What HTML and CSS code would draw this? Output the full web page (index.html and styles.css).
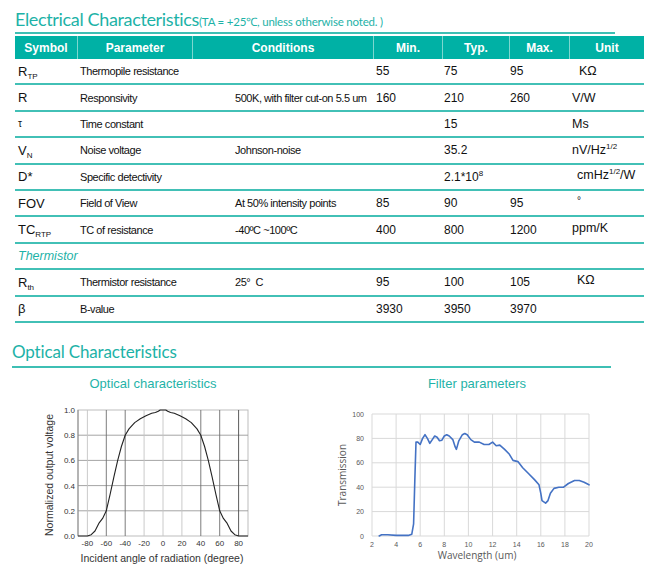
FILE: index.html
```html
<!DOCTYPE html>
<html>
<head>
<meta charset="utf-8">
<link rel="stylesheet" href="styles.css">
</head>
<body>
<div class="page">
  <h1 class="sec-title elec">Electrical Characteristics<span class="note">(TA = +25℃, unless otherwise noted. )</span></h1>

  <div class="spec">
    <div class="row head">
      <div class="c">Symbol</div><div class="c">Parameter</div><div class="c">Conditions</div><div class="c">Min.</div><div class="c">Typ.</div><div class="c">Max.</div><div class="c">Unit</div>
    </div>
    <div class="row">
      <div class="sym">R<sub>TP</sub></div><div class="par">Thermopile resistance</div><div class="cond"></div><div class="min">55</div><div class="typ">75</div><div class="max">95</div><div class="unit ind">KΩ</div>
    </div>
    <div class="row">
      <div class="sym">R</div><div class="par">Responsivity</div><div class="cond">500K, with filter cut-on 5.5 um</div><div class="min">160</div><div class="typ">210</div><div class="max">260</div><div class="unit">V/W</div>
    </div>
    <div class="row">
      <div class="sym tau">τ</div><div class="par">Time constant</div><div class="cond"></div><div class="min"></div><div class="typ">15</div><div class="max"></div><div class="unit">Ms</div>
    </div>
    <div class="row">
      <div class="sym">V<sub>N</sub></div><div class="par">Noise voltage</div><div class="cond">Johnson-noise</div><div class="min"></div><div class="typ">35.2</div><div class="max"></div><div class="unit">nV/Hz<sup>1/2</sup></div>
    </div>
    <div class="row">
      <div class="sym">D*</div><div class="par">Specific detectivity</div><div class="cond"></div><div class="min"></div><div class="typ">2.1*10<sup>8</sup></div><div class="max"></div><div class="unit ind2 up">cmHz<sup>1/2</sup>/W</div>
    </div>
    <div class="row">
      <div class="sym">FOV</div><div class="par">Field of View</div><div class="cond">At 50% intensity points</div><div class="min">85</div><div class="typ">90</div><div class="max">95</div><div class="unit ind2 deg">°</div>
    </div>
    <div class="row">
      <div class="sym">TC<sub>RTP</sub></div><div class="par">TC of resistance</div><div class="cond">-40ºC ~100ºC</div><div class="min">400</div><div class="typ">800</div><div class="max">1200</div><div class="unit up">ppm/K</div>
    </div>
    <div class="row group">
      <div class="grp">Thermistor</div>
    </div>
    <div class="row">
      <div class="sym">R<sub>th</sub></div><div class="par">Thermistor resistance</div><div class="cond">25°&nbsp; C</div><div class="min">95</div><div class="typ">100</div><div class="max">105</div><div class="unit ind2 up">KΩ</div>
    </div>
    <div class="row">
      <div class="sym">β</div><div class="par">B-value</div><div class="cond"></div><div class="min">3930</div><div class="typ">3950</div><div class="max">3970</div><div class="unit"></div>
    </div>
  </div>

  <h2 class="sec-title opt">Optical Characteristics</h2>

  <div class="charts">
    <figure class="fig left">
      <figcaption class="cap">Optical characteristics</figcaption>
      <svg class="plot" width="306" height="185" viewBox="0 0 306 185">
        <rect x="78" y="15" width="170" height="126" fill="#fff" stroke="#bdbdbd" stroke-width="1"/>
        <g stroke="#9a9a9a" stroke-width="0.9">
          <line x1="78" y1="40.2" x2="248" y2="40.2"/>
          <line x1="78" y1="65.4" x2="248" y2="65.4"/>
          <line x1="78" y1="90.6" x2="248" y2="90.6"/>
          <line x1="78" y1="115.8" x2="248" y2="115.8"/>
          <line x1="87.4" y1="15" x2="87.4" y2="141" stroke="#c4c4c4"/>
          <line x1="106.3" y1="15" x2="106.3" y2="141" stroke="#6e6e6e"/>
          <line x1="125.2" y1="15" x2="125.2" y2="141" stroke="#6e6e6e"/>
          <line x1="144.1" y1="15" x2="144.1" y2="141" stroke="#c4c4c4"/>
          <line x1="163" y1="15" x2="163" y2="141" stroke="#c4c4c4"/>
          <line x1="181.9" y1="15" x2="181.9" y2="141" stroke="#c4c4c4"/>
          <line x1="200.8" y1="15" x2="200.8" y2="141" stroke="#6e6e6e"/>
          <line x1="219.7" y1="15" x2="219.7" y2="141" stroke="#6e6e6e"/>
          <line x1="238.6" y1="15" x2="238.6" y2="141" stroke="#4a4a4a"/>
        </g>
        <line x1="78" y1="15" x2="78" y2="141" stroke="#8a8a8a" stroke-width="1"/>
        <polyline fill="none" stroke="#222" stroke-width="1.1" stroke-linejoin="round"
          points="78,141 87.4,141 91.2,139.7 95,136 98.8,128.4 102.6,123.4 106.3,115.8 110.1,99.4 113.9,81.8 117.7,65.4 121.4,51.5 125.2,40.2 129,33.9 134.7,27.6 140.3,23.8 146,20.7 151.7,18.2 155.4,17.5 158.3,16.3 160.2,15 165.8,15 167.7,16.3 170.6,17.5 174.3,18.2 180,20.7 185.7,23.8 191.3,27.6 197,33.9 200.8,40.2 204.6,51.5 208.3,65.4 212.1,81.8 215.9,99.4 219.7,115.8 223.4,123.4 227.2,128.4 231,136 234.8,139.7 238.6,141 248,141"/>
        <g class="tick" text-anchor="end">
          <text x="75" y="18">1.0</text>
          <text x="75" y="43.2">0.8</text>
          <text x="75" y="68.4">0.6</text>
          <text x="75" y="93.6">0.4</text>
          <text x="75" y="118.8">0.2</text>
          <text x="75" y="144">0.0</text>
        </g>
        <g class="tick" text-anchor="middle">
          <text x="87.4" y="151">-80</text>
          <text x="106.3" y="151">-60</text>
          <text x="125.2" y="151">-40</text>
          <text x="144.1" y="151">-20</text>
          <text x="163" y="151">0</text>
          <text x="181.9" y="151">20</text>
          <text x="200.8" y="151">40</text>
          <text x="219.7" y="151">60</text>
          <text x="238.6" y="151">80</text>
        </g>
        <text class="axis" x="162" y="166.5" text-anchor="middle">Incident angle of radiation (degree)</text>
        <text class="axis" x="0" y="0" text-anchor="middle" transform="translate(52.5 80) rotate(-90)">Normalized output voltage</text>
      </svg>
    </figure>

    <figure class="fig right">
      <figcaption class="cap">Filter parameters</figcaption>
      <svg class="plot" width="342" height="185" viewBox="0 0 342 185">
        <g stroke="#d9d9d9" stroke-width="1">
          <line x1="66" y1="19" x2="283" y2="19"/>
          <line x1="66" y1="43.4" x2="283" y2="43.4"/>
          <line x1="66" y1="67.8" x2="283" y2="67.8"/>
          <line x1="66" y1="92.2" x2="283" y2="92.2"/>
          <line x1="66" y1="116.6" x2="283" y2="116.6"/>
          <line x1="66" y1="141" x2="283" y2="141"/>
          <line x1="66" y1="19" x2="66" y2="141"/>
          <line x1="90.1" y1="19" x2="90.1" y2="141"/>
          <line x1="114.2" y1="19" x2="114.2" y2="141"/>
          <line x1="138.3" y1="19" x2="138.3" y2="141"/>
          <line x1="162.4" y1="19" x2="162.4" y2="141"/>
          <line x1="186.6" y1="19" x2="186.6" y2="141"/>
          <line x1="210.7" y1="19" x2="210.7" y2="141"/>
          <line x1="234.8" y1="19" x2="234.8" y2="141"/>
          <line x1="258.9" y1="19" x2="258.9" y2="141"/>
          <line x1="283" y1="19" x2="283" y2="141"/>
        </g>
        <polyline fill="none" stroke="#4472c4" stroke-width="1.6" stroke-linejoin="round" stroke-linecap="round"
          points="73.2,141 75.6,139.8 81.7,139.8 90.1,140.4 102.2,140.4 105.8,139.2 107.6,128.8 108.8,86.1 110,47.1 111.8,47.1 114.2,49.5 116.6,43.4 119,39.7 121.4,43.4 123.8,48.3 126.3,44.6 128.7,41 131.1,42.2 133.5,45.8 135.9,45.2 138.3,41 140.7,39.7 143.2,41 146.8,44.6 149.2,51.9 150.4,54.4 152.8,45.8 156.4,39.7 158.8,38.5 161.2,39.7 164.8,44.6 168.4,47.1 173.3,47.1 178.1,49.5 182.9,49.5 186.6,47.1 190.2,50.7 193.8,50.1 198.6,54.4 203.4,59.3 207,65.4 211.9,66.6 216.7,72.7 222.7,78.8 228.7,84.9 233,89.8 234.8,98.3 236,105.6 239.6,108.1 242,105.6 244.4,98.3 248,93.4 252.8,92.2 257.6,92.2 262.4,88.5 268.5,85.5 273.3,85.5 278.1,87.3 283,89.8"/>
        <g class="tick2" text-anchor="end">
          <text x="58" y="21.5">100</text>
          <text x="58" y="45.9">80</text>
          <text x="58" y="70.3">60</text>
          <text x="58" y="94.7">40</text>
          <text x="58" y="119.1">20</text>
          <text x="58" y="143.5">0</text>
        </g>
        <g class="tick2" text-anchor="middle">
          <text x="66" y="152">2</text>
          <text x="90.1" y="152">4</text>
          <text x="114.2" y="152">6</text>
          <text x="138.3" y="152">8</text>
          <text x="162.4" y="152">10</text>
          <text x="186.6" y="152">12</text>
          <text x="210.7" y="152">14</text>
          <text x="234.8" y="152">16</text>
          <text x="258.9" y="152">18</text>
          <text x="283" y="152">20</text>
        </g>
        <text class="axis2" x="171" y="164" text-anchor="middle">Wavelength (um)</text>
        <text class="axis2" x="0" y="0" text-anchor="middle" transform="translate(39.5 80) rotate(-90)">Transmission</text>
      </svg>
    </figure>
  </div>
</div>
</body>
</html>
```
FILE: styles.css
```css
* { box-sizing: border-box; }
html, body { margin: 0; padding: 0; background: #fff; }
body { font-family: "Liberation Sans", Arial, sans-serif; color: #111; }
.page { width: 659px; height: 580px; overflow: hidden; }

.sec-title {
  font-family: Lato, "Open Sans", sans-serif;
  font-weight: 400;
  color: #1db2a7;
  margin: 0;
  border-bottom: 2px solid #3ebfb4;
  white-space: nowrap;
}
.sec-title.elec {
  margin-left: 15px;
  width: 600px;
  height: 34px;
  font-size: 18px;
  letter-spacing: -0.35px;
  line-height: 22px;
  padding-top: 8px;
  padding-bottom: 2px;
}
.note { font-size: 11.5px; letter-spacing: -0.2px; line-height: 1; }
.sec-title.opt {
  margin: 18px 0 0 12px;
  width: 599px;
  font-size: 17px;
  letter-spacing: -0.15px;
  line-height: 22px;
  padding-bottom: 3px;
}

.spec { margin: 2px 0 0 15px; width: 629px; }
.row {
  display: grid;
  grid-template-columns: 62px 115px 181px 69px 67px 60px 75px;
  align-items: center;
  height: 26.4px;
  border-bottom: 2px solid #42c0b6;
  font-size: 12px;
  color: #111;
  white-space: nowrap;
}
.row.head {
  height: 23px;
  background: #00b1a5;
  border-bottom: 0;
  align-items: stretch;
}
.row.head .c {
  color: #fff;
  font-weight: bold;
  font-size: 12px;
  display: flex;
  align-items: center;
  justify-content: center;
  border-left: 1px solid #7dd7cf;
}
.row.head .c:first-child { border-left: 0; }

.sym { padding-left: 3px; font-size: 13px; }
.sym sub { font-size: 8px; vertical-align: -3px; line-height: 0; }
.sym.tau { font-size: 10px; }
.par, .cond {
  font-family: "Liberation Sans", Arial, sans-serif;
  font-size: 11px;
  letter-spacing: -0.45px;
}
.par { padding-left: 3px; }
.cond { padding-left: 43px; }
.min { padding-left: 3px; }
.typ { padding-left: 2px; }
.max { padding-left: 1px; }
.unit { padding-left: 3px; font-size: 12.5px; }
.unit.ind { padding-left: 10px; }
.unit.ind2 { padding-left: 8px; }
.unit.up { position: relative; top: -2px; }
.unit.deg { position: relative; top: -3px; font-size: 10px; }
sup { font-size: 8px; vertical-align: 5px; line-height: 0; letter-spacing: 0; }
.grp { grid-column: 1 / 4; padding-left: 3px; color: #1db2a7; font-style: italic; font-size: 12.5px; }

.charts { display: flex; margin-top: 8px; }
.fig { margin: 0; display: flex; flex-direction: column; align-items: center; }
.fig.left { width: 306px; }
.fig.right { width: 342px; }
.cap {
  font-family: "Liberation Sans", Arial, sans-serif;
  font-size: 13px;
  line-height: 16px;
  color: #1fb3a8;
}
.plot { display: block; margin-top: 3px; }
.tick { font-family: "Liberation Sans", Arial, sans-serif; font-size: 8px; fill: #333; }
.axis { font-family: "Liberation Sans", Arial, sans-serif; font-size: 10.5px; fill: #333; }
.tick2 { font-family: "Liberation Sans", Arial, sans-serif; font-size: 7px; fill: #595959; }
.axis2 { font-family: "Open Sans", "Liberation Sans", sans-serif; font-size: 10px; fill: #595959; }
```
